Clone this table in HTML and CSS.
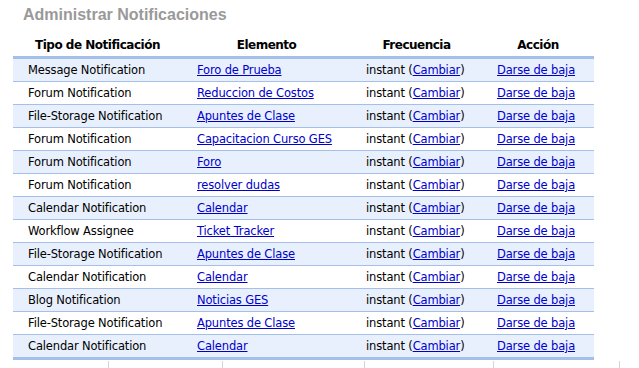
FILE: index.html
```html
<!DOCTYPE html>
<html>
<head>
<meta charset="utf-8">
<link rel="stylesheet" href="styles.css">
</head>
<body>
<h1 class="title">Administrar Notificaciones</h1>
<table class="notif">
  <colgroup>
    <col class="c1"><col class="c2"><col class="c3"><col class="c4">
  </colgroup>
  <thead>
    <tr><th>Tipo de Notificación</th><th>Elemento</th><th>Frecuencia</th><th>Acción</th></tr>
  </thead>
  <tbody>
    <tr class="odd"><td>Message Notification</td><td><a href="#">Foro de Prueba</a></td><td>instant (<a href="#">Cambiar</a>)</td><td><a href="#">Darse de baja</a></td></tr>
    <tr><td>Forum Notification</td><td><a href="#">Reduccion de Costos</a></td><td>instant (<a href="#">Cambiar</a>)</td><td><a href="#">Darse de baja</a></td></tr>
    <tr class="odd"><td>File-Storage Notification</td><td><a href="#">Apuntes de Clase</a></td><td>instant (<a href="#">Cambiar</a>)</td><td><a href="#">Darse de baja</a></td></tr>
    <tr><td>Forum Notification</td><td><a href="#">Capacitacion Curso GES</a></td><td>instant (<a href="#">Cambiar</a>)</td><td><a href="#">Darse de baja</a></td></tr>
    <tr class="odd"><td>Forum Notification</td><td><a href="#">Foro</a></td><td>instant (<a href="#">Cambiar</a>)</td><td><a href="#">Darse de baja</a></td></tr>
    <tr><td>Forum Notification</td><td><a href="#">resolver dudas</a></td><td>instant (<a href="#">Cambiar</a>)</td><td><a href="#">Darse de baja</a></td></tr>
    <tr class="odd"><td>Calendar Notification</td><td><a href="#">Calendar</a></td><td>instant (<a href="#">Cambiar</a>)</td><td><a href="#">Darse de baja</a></td></tr>
    <tr><td>Workflow Assignee</td><td><a href="#">Ticket Tracker</a></td><td>instant (<a href="#">Cambiar</a>)</td><td><a href="#">Darse de baja</a></td></tr>
    <tr class="odd"><td>File-Storage Notification</td><td><a href="#">Apuntes de Clase</a></td><td>instant (<a href="#">Cambiar</a>)</td><td><a href="#">Darse de baja</a></td></tr>
    <tr><td>Calendar Notification</td><td><a href="#">Calendar</a></td><td>instant (<a href="#">Cambiar</a>)</td><td><a href="#">Darse de baja</a></td></tr>
    <tr class="odd"><td>Blog Notification</td><td><a href="#">Noticias GES</a></td><td>instant (<a href="#">Cambiar</a>)</td><td><a href="#">Darse de baja</a></td></tr>
    <tr><td>File-Storage Notification</td><td><a href="#">Apuntes de Clase</a></td><td>instant (<a href="#">Cambiar</a>)</td><td><a href="#">Darse de baja</a></td></tr>
    <tr class="odd"><td>Calendar Notification</td><td><a href="#">Calendar</a></td><td>instant (<a href="#">Cambiar</a>)</td><td><a href="#">Darse de baja</a></td></tr>
  </tbody>
</table>
<div class="ticks">
  <span class="t1"></span><span class="t2"></span><span class="t3"></span><span class="t4"></span><span class="t5"></span>
</div>
</body>
</html>
```
FILE: styles.css
```css
html, body {
  margin: 0;
  padding: 0;
  background: #fff;
}
body {
  font-family: "DejaVu Sans", Tahoma, sans-serif;
  font-size: 11.5px;
  letter-spacing: -0.15px;
  color: #000;
  overflow: hidden;
}
.title {
  margin: 0;
  padding: 5px 0 0 23px;
  height: 21px;
  font-family: "Liberation Sans", Arial, sans-serif;
  font-size: 16px;
  font-weight: bold;
  letter-spacing: 0;
  color: #999;
  line-height: 19px;
}
.notif {
  margin: 7px 0 0 13px;
  width: 581px;
  border-collapse: collapse;
  table-layout: fixed;
}
.c1 { width: 169px; }
.c2 { width: 169px; }
.c3 { width: 131px; }
.c4 { width: 112px; }
.notif th {
  font-weight: bold;
  font-size: 12px;
  letter-spacing: -0.5px;
  text-align: center;
  height: 20px;
  padding: 2px 0 1px;
  border-bottom: 3px solid #a4bfe9;
  vertical-align: middle;
}
.notif td {
  height: 22px;
  padding: 0 0 0 15px;
  border-bottom: 1px solid #a4bfe9;
  white-space: nowrap;
  vertical-align: middle;
}
.notif tr.odd td {
  background: #e8f0fd;
}
.notif tbody tr:last-child td {
  border-bottom: 3px solid #a4bfe9;
}
.notif a {
  color: #0000cc;
  text-decoration: underline;
}
.ticks {
  position: relative;
  height: 12px;
}
.ticks span {
  position: absolute;
  top: 1px;
  width: 1px;
  height: 10px;
  background: #d4d4d4;
}
.t1 { left: 108px; }
.t2 { left: 222px; }
.t3 { left: 364px; }
.t4 { left: 493px; }
.t5 { left: 619px; width: 2px; }
```
